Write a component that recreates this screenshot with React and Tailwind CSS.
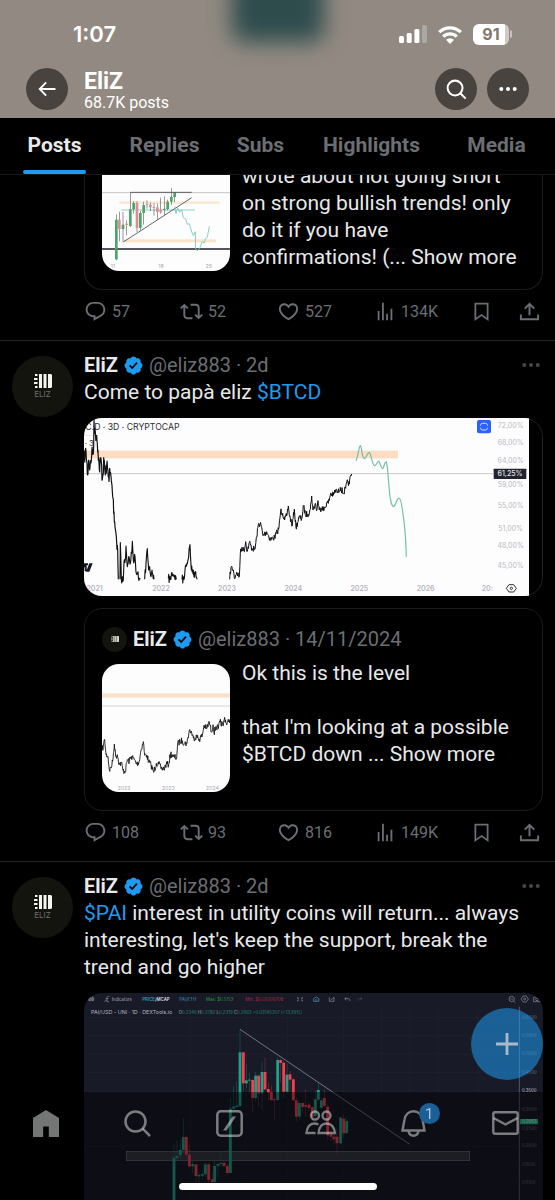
import React from "react";

/* ---------- icons ---------- */

const PATHS = {
  reply:
    "M1.751 10c0-4.42 3.584-8 8.005-8h4.366c4.49 0 8.129 3.64 8.129 8.13 0 2.96-1.607 5.68-4.196 7.11l-8.054 4.46v-3.69h-.067c-4.49.1-8.183-3.51-8.183-8.01zm8.005-6c-3.317 0-6.005 2.69-6.005 6 0 3.37 2.77 6.08 6.138 6.01l.351-.01h1.761v2.3l5.087-2.81c1.951-1.08 3.163-3.13 3.163-5.36 0-3.39-2.744-6.13-6.129-6.13H9.756z",
  repost:
    "M4.5 3.88l4.432 4.14-1.364 1.46L5.5 7.55V16c0 1.1.896 2 2 2H13v2H7.5c-2.209 0-4-1.79-4-4V7.55L1.432 9.48.068 8.02 4.5 3.88zM16.5 6H11V4h5.500c2.209 0 4 1.79 4 4v8.45l2.068-1.93 1.364 1.46-4.432 4.14-4.432-4.14 1.364-1.46 2.068 1.93V8c0-1.1-.896-2-2-2z",
  like:
    "M16.697 5.5c-1.222-.06-2.679.51-3.89 2.16l-.805 1.09-.806-1.09C9.984 6.01 8.526 5.44 7.304 5.5c-1.243.07-2.349.78-2.91 1.91-.552 1.12-.633 2.78.479 4.82 1.074 1.97 3.257 4.27 7.129 6.61 3.87-2.34 6.052-4.64 7.126-6.61 1.111-2.04 1.03-3.7.477-4.82-.561-1.13-1.666-1.84-2.908-1.91zm4.187 7.69c-1.351 2.48-4.001 5.12-8.379 7.67l-.503.3-.504-.3c-4.379-2.55-7.029-5.19-8.382-7.67-1.36-2.5-1.41-4.86-.514-6.67.887-1.79 2.647-2.91 4.601-3.01 1.651-.09 3.368.56 4.798 2.01 1.429-1.45 3.146-2.1 4.796-2.01 1.954.1 3.714 1.22 4.601 3.01.896 1.81.846 4.17-.514 6.67z",
  views: "M8.75 21V2h2v19h-2zM18 21V8.5h2V21h-2zM4 21l.004-10h2L6 21H4zm9.248 0v-7h2v7h-2z",
  bookmark: "M4 2h16v20.94l-8-5.71-8 5.71V2zm2 2v15.06l6-4.29 6 4.29V4H6z",
  share:
    "M12 2.59l5.7 5.7-1.41 1.42L13 6.41V16h-2V6.41l-3.3 3.3-1.41-1.42L12 2.59zM22 15v6H2v-6h2v4h16v-4h2z",
  verified:
    "M20.396 11c-.018-.646-.215-1.275-.57-1.816-.354-.54-.852-.972-1.438-1.246.223-.607.27-1.264.14-1.897-.131-.634-.437-1.218-.882-1.687-.47-.445-1.053-.75-1.687-.882-.633-.13-1.29-.083-1.897.14-.273-.587-.704-1.086-1.245-1.44S11.647 1.62 11 1.604c-.646.017-1.273.213-1.813.568s-.969.854-1.24 1.44c-.608-.223-1.267-.272-1.902-.14-.635.13-1.22.436-1.69.882-.445.47-.749 1.055-.878 1.688-.13.633-.08 1.29.144 1.896-.587.274-1.087.705-1.443 1.245-.356.54-.555 1.17-.574 1.817.02.647.218 1.276.574 1.817.356.54.856.972 1.443 1.245-.224.606-.274 1.263-.144 1.896.13.634.433 1.218.877 1.688.47.443 1.054.747 1.687.878.633.132 1.29.084 1.897-.136.274.586.705 1.084 1.246 1.439.54.354 1.17.551 1.816.569.647-.016 1.276-.213 1.817-.567s.972-.854 1.245-1.44c.604.239 1.266.296 1.903.164.636-.132 1.22-.447 1.68-.907.46-.46.776-1.044.908-1.681s.075-1.299-.165-1.903c.586-.274 1.084-.705 1.439-1.246.354-.54.551-1.17.569-1.816zM9.662 14.85l-3.429-3.428 1.293-1.302 2.072 2.072 4.4-4.794 1.347 1.246z",
};

function Icon({ name, className }) {
  return (
    <svg viewBox="0 0 24 24" fill="currentColor" className={className} aria-hidden="true">
      <path d={PATHS[name]} />
    </svg>
  );
}

function Verified() {
  return (
    <svg viewBox="1 1 20 20" className="size-[19px] shrink-0" role="img" aria-label="Verified">
      <path fill="#1d9bf0" d={PATHS.verified} />
    </svg>
  );
}

function Dots({ className }) {
  return (
    <svg viewBox="0 0 18 6" fill="currentColor" className={className} aria-hidden="true">
      <circle cx="2.3" cy="3" r="2" />
      <circle cx="9" cy="3" r="2" />
      <circle cx="15.7" cy="3" r="2" />
    </svg>
  );
}

function LogoMark({ className }) {
  return (
    <svg viewBox="0 0 18 14" fill="#f4f4f0" className={className} aria-hidden="true">
      <path d="M1 0h2.500v2H1zM0 4h3.500v2H0zM0 8h3.500v2H0zM1 12h2.500v2H1zM5 0h3v14H5zM9.500 0h3v14h-3zM14 0h3l1 1v12l-1 1h-3z" />
    </svg>
  );
}

/* ---------- chart helpers ---------- */

function jagged(points, amp, step) {
  let seed = 7;
  const rand = () => {
    seed = (seed * 16807) % 2147483647;
    return seed / 2147483647 - 0.5;
  };
  let d = "";
  for (let i = 0; i < points.length - 1; i++) {
    const [x0, y0] = points[i];
    const [x1, y1] = points[i + 1];
    const n = Math.max(1, Math.round(Math.abs(x1 - x0) / step));
    for (let k = 0; k < n; k++) {
      const x = x0 + ((x1 - x0) * k) / n;
      const y = y0 + ((y1 - y0) * k) / n + (k ? rand() * amp : 0);
      d += `${d ? "L" : "M"}${x.toFixed(1)} ${y.toFixed(1)}`;
    }
  }
  const last = points[points.length - 1];
  return `${d}L${last[0]} ${last[1]}`;
}

function Candles({ data, up, down, width, wick }) {
  return data.map(([x, top, bottom, high, low, rising]) => (
    <g key={x} fill={rising ? up : down}>
      <rect x={x - 0.75} y={high} width="1.5" height={low - high} fill={wick} opacity={wick ? 1 : 0.6} />
      <rect x={x - width / 2} y={top} width={width} height={bottom - top} />
    </g>
  ));
}

/* ---------- charts ---------- */

const DOM_A = [[12, 150], [18, 122], [23, 195], [26, 150], [30, 172], [35, 135], [41, 110], [42, 28], [44, 70], [50, 76], [54, 120], [58, 178], [63, 145], [67, 208], [72, 150], [76, 195], [80, 165], [86, 200], [90, 185], [94, 212], [99, 265], [104, 335], [109, 380], [113, 420], [115, 508]];
const DOM_B = [
  [[120, 508], [121, 398], [124, 508], [130, 508], [132, 455], [136, 450], [138, 408], [142, 470], [146, 440], [150, 462], [155, 430], [157, 394], [160, 450], [165, 440], [169, 490], [174, 485], [178, 508], [180, 508]],
  [[194, 508], [198, 462], [202, 416], [206, 480], [209, 470], [213, 500], [216, 480], [222, 508]],
  [[265, 505], [271, 508], [276, 488], [283, 496], [289, 508]],
  [[306, 508], [312, 508], [317, 465], [323, 455], [330, 404], [334, 480], [340, 480], [343, 502], [347, 485], [352, 508]],
  [[449, 508], [453, 472], [460, 480], [463, 505], [470, 487], [478, 500], [481, 430], [486, 412], [492, 424], [497, 395], [502, 424], [508, 398], [516, 415], [525, 418], [530, 380], [536, 340], [543, 345], [549, 377], [560, 365], [571, 388], [584, 382], [592, 365], [597, 352], [602, 302], [608, 310], [614, 330], [620, 318], [625, 288], [629, 320], [637, 345], [643, 298], [648, 354], [657, 322], [665, 327], [671, 288], [676, 314], [684, 312], [691, 298], [695, 258], [699, 300], [706, 280], [710, 302], [714, 272], [718, 300], [727, 290], [732, 302], [740, 278], [745, 280], [752, 250], [760, 256], [767, 240], [774, 248], [781, 232], [790, 250], [797, 235], [803, 215], [808, 222], [812, 196], [815, 192]],
];
const SCALE_Y = [["72,00%", 46], ["68,00%", 97], ["64,00%", 151], ["59,00%", 224], ["55,00%", 287], ["51,00%", 355], ["48,00%", 408], ["45,00%", 467]];
const YEARS = [["2021", 44], ["2022", 243], ["2023", 441], ["2024", 640], ["2025", 838], ["2026", 1037]];

function DominanceChart() {
  return (
    <svg viewBox="12 24 1377 534" className="block w-full" role="img" aria-label="BTC.D 3 day chart" fontFamily="Inter, sans-serif">
      <rect x="13.5" y="25.5" width="1374" height="531" rx="54" fill="#000" stroke="#202327" strokeWidth="3" />
      <rect x="12" y="22" width="1335" height="538" fill="#fefdfe" />
      <rect x="12" y="122" width="942" height="23" fill="#fcdcc3" />
      <path d="M12 191H1238" stroke="#c9c9cb" strokeWidth="3" />
      <path d="M12 76H46M46 76V110" stroke="#dddddd" strokeWidth="2" fill="none" />
      <g fill="none" stroke="#111214" strokeLinejoin="round">
        <path d={jagged(DOM_A, 42, 1.1)} strokeWidth="3.6" />
        {DOM_B.map((seg, i) => (
          <path key={i} d={jagged(seg, i < 4 ? 26 : 20, 1.3)} strokeWidth={i < 4 ? 3.4 : 3} />
        ))}
      </g>
      <path
        d="M828 152C834 140 836 112 841 107C846 112 846 146 853 146C860 144 862 126 868 127C874 132 876 166 884 167C891 164 892 152 897 154C901 160 903 176 908 176C912 174 914 153 919 156C924 170 926 230 930 260C934 282 936 290 941 290C948 286 950 264 957 264C964 266 966 290 970 320C976 360 978 400 979 440"
        fill="none"
        stroke="#6cbfa5"
        strokeWidth="3.4"
      />
      <g fill="#2a2c33">
        <text x="16" y="60" fontSize="26">C.D · 3D · CRYPTOCAP</text>
        <text x="14" y="107" fontSize="23">· 3</text>
      </g>
      <path d="M12 460h12v6h-4v18h-6v-12h-2zM28 460h10l-10 25h-10z" fill="#131722" />
      <g fill="#b5b5ba" fontSize="21" fontWeight="600" textAnchor="middle">
        {YEARS.map(([y, x]) => (
          <text key={y} x={x} y="542">{y}</text>
        ))}
        <text x="1222" y="542">20:</text>
      </g>
      <g fill="#b9b9be" fontSize="21" textAnchor="middle">
        {SCALE_Y.map(([t, y]) => (
          <text key={t} x="1292" y={y + 7}>{t}</text>
        ))}
      </g>
      <rect x="1241" y="176" width="98" height="31" rx="2" fill="#21232e" />
      <text x="1290" y="199" fontSize="21" fontWeight="500" fill="#e4e4e8" textAnchor="middle">61,25%</text>
      <rect x="1191" y="30" width="42" height="40" rx="6" fill="#2962ff" />
      <path d="M1202 47v-2c0-3 2-5 5-5h10c3 0 5 2 5 5v2M1202 53v2c0 3 2 5 5 5h10c3 0 5-2 5-5v-2" fill="none" stroke="#fff" strokeWidth="2.4" />
      <g fill="none" stroke="#333" strokeWidth="3">
        <path d="M1287 524h14l8 11-8 11h-14l-8-11z" />
        <circle cx="1294" cy="535" r="3.5" />
      </g>
    </svg>
  );
}

const THUMB_LINE = [[66, 436], [70, 425], [74, 404], [78, 450], [84, 455], [88, 495], [93, 490], [98, 470], [103, 418], [107, 455], [112, 450], [118, 478], [124, 475], [129, 497], [136, 500], [142, 465], [148, 470], [154, 455], [162, 464], [170, 478], [178, 470], [183, 435], [190, 411], [194, 452], [201, 452], [206, 472], [213, 480], [221, 503], [229, 476], [236, 478], [244, 492], [252, 492], [259, 478], [266, 480], [272, 446], [280, 456], [290, 460], [293, 418], [300, 410], [307, 408], [313, 416], [321, 416], [328, 376], [335, 384], [340, 400], [350, 396], [358, 404], [367, 392], [372, 362], [380, 372], [388, 352], [394, 382], [399, 360], [402, 385], [408, 365], [415, 372], [420, 352], [430, 362], [434, 338], [439, 356], [446, 352], [450, 346]];

function LevelThumb() {
  return (
    <svg viewBox="66 178 384 384" className="size-32 shrink-0 rounded-[17px]" role="img" aria-label="BTC.D level" fontFamily="Inter, sans-serif">
      <rect x="66" y="178" width="384" height="384" fill="#fefdfe" />
      <rect x="66" y="266" width="384" height="13" fill="#fbe0ca" />
      <path d="M66 304H450" stroke="#c9c9cb" strokeWidth="2.5" />
      <path d={jagged(THUMB_LINE, 20, 1.3)} fill="none" stroke="#111214" strokeWidth="2.6" />
      <g fill="#a9a9ae" fontSize="16" textAnchor="middle">
        <text x="132" y="556">2022</text>
        <text x="265" y="556">2023</text>
        <text x="397" y="556">2024</text>
      </g>
    </svg>
  );
}

const TREND_CANDLES = [
  [109, 148, 267, 132, 270, 1], [118, 148, 176, 124, 213, 0], [129, 163, 176, 125, 215, 1], [140, 160, 164, 150, 195, 0], [151, 117, 167, 66, 170, 1],
  [161, 98, 117, 92, 130, 1], [171, 98, 173, 92, 185, 0], [181, 128, 173, 122, 180, 1], [191, 104, 128, 94, 163, 1], [201, 101, 103, 90, 115, 0],
  [211, 103, 111, 96, 122, 0], [222, 110, 113, 98, 136, 0], [232, 111, 125, 100, 148, 0], [242, 118, 126, 82, 130, 0], [253, 116, 119, 78, 134, 1],
  [263, 94, 116, 88, 120, 1], [274, 80, 94, 53, 104, 1], [284, 66, 80, 66, 95, 1],
];

function TrendThumb() {
  return (
    <svg viewBox="66 -82 384 384" className="size-32 shrink-0 rounded-[17px]" role="img" aria-label="Trend with projection" fontFamily="Inter, sans-serif">
      <rect x="66" y="-82" width="384" height="384" fill="#fefdfe" />
      <rect x="118" y="93" width="300" height="8" fill="#f8e8d6" />
      <rect x="132" y="207" width="276" height="9" fill="#fae3c6" />
      <path d="M66 67H450" stroke="#aaa" strokeWidth="2" />
      <path d="M66 236H450" stroke="#1c1e2b" strokeWidth="4" />
      <path d="M124 119H345" stroke="#73c4b8" strokeWidth="2.4" />
      <Candles data={TREND_CANDLES} up="#4ba567" down="#df8c93" width={8} wick="#33363a" />
      <path d="M151 66H335M130 215L335 82" stroke="#4a4a52" strokeWidth="2.6" />
      <path d="M284 108L288 130L293 112L299 126L305 118L310 142L317 146L322 162L328 160L334 182L340 196L346 184L347 236L352 242L360 232L366 214L373 218L376 206L382 200L388 168" fill="none" stroke="#73c9bd" strokeWidth="2.6" />
      <g fill="#a9a9ae" fontSize="16" textAnchor="middle">
        <text x="99" y="293">11</text>
        <text x="243" y="293">18</text>
        <text x="386" y="293">25</text>
      </g>
    </svg>
  );
}

const PAI_CANDLES = [
  [282, 515, 770, 475, 770, 1], [291, 510, 516, 462, 520, 1], [301, 492, 508, 462, 520, 1], [310, 453, 492, 395, 500, 1], [319, 453, 506, 450, 518, 0],
  [328, 506, 541, 475, 545, 0], [338, 534, 541, 525, 560, 1], [348, 535, 570, 533, 588, 0], [357, 567, 571, 560, 592, 1], [367, 564, 569, 550, 580, 1],
  [376, 535, 565, 530, 575, 1], [386, 535, 582, 532, 590, 0], [397, 580, 588, 560, 592, 0], [404, 540, 588, 520, 590, 1], [414, 534, 540, 528, 580, 1],
  [423, 531, 534, 500, 545, 1], [432, 530, 540, 525, 545, 0], [442, 540, 561, 535, 568, 0], [451, 368, 561, 335, 561, 1], [461, 362, 368, 300, 372, 1],
  [470, 359, 363, 285, 363, 1], [480, 199, 361, 130, 361, 1], [490, 199, 292, 197, 315, 0], [499, 283, 292, 235, 305, 1], [508, 281, 284, 262, 322, 1],
  [518, 282, 336, 278, 380, 0], [527, 269, 336, 258, 345, 1], [536, 269, 322, 265, 362, 0], [546, 258, 322, 228, 372, 1], [555, 258, 310, 215, 312, 0],
  [565, 309, 320, 290, 345, 0], [574, 318, 342, 300, 345, 0], [583, 340, 343, 335, 402, 0], [593, 222, 342, 215, 345, 1], [602, 222, 231, 218, 290, 0],
  [611, 230, 317, 226, 335, 0], [621, 266, 317, 232, 322, 1], [630, 265, 281, 255, 320, 0], [640, 280, 343, 275, 345, 0], [649, 343, 392, 335, 405, 0],
  [658, 351, 392, 345, 402, 1], [668, 351, 363, 345, 380, 0], [677, 357, 362, 312, 390, 0], [687, 356, 366, 350, 375, 0], [697, 364, 394, 360, 405, 0],
  [706, 340, 390, 315, 395, 1], [715, 312, 341, 290, 345, 1], [724, 343, 365, 335, 370, 1], [733, 336, 360, 310, 362, 0],
  [743, 362, 448, 355, 460, 0], [753, 445, 452, 432, 465, 0], [762, 452, 460, 440, 475, 0], [771, 452, 472, 430, 510, 0], [782, 395, 472, 390, 475, 1],
  [791, 398, 442, 385, 455, 0], [800, 405, 441, 395, 445, 1],
];
const PAI_SCALE = [["0.6000", 98], ["0.5500", 153], ["0.5000", 208], ["0.4000", 263], ["0.3500", 318], ["0.3000", 374], ["0.2500", 432], ["0.2000", 483], ["0.1500", 539], ["0.1000", 594]];

function PaiChart() {
  return (
    <svg viewBox="12 21 1377 750" className="block w-full" role="img" aria-label="PAI/USD daily chart" fontFamily="Inter, sans-serif">
      <rect x="10" y="20" width="1380" height="751" fill="#181a27" />
      <path
        d="M330 95V771M500 95V771M622 95V771M790 60V771M905 60V771M988 60V771M1075 60V771M1195 60V771M10 94H1318M10 148H1318M10 204H1318M10 260H1318M10 316H1318M10 406H1318M10 480H1318M10 535H1318M10 590H1318"
        stroke="#202331"
        strokeWidth="2"
      />
      <rect x="139" y="496" width="1030" height="28" fill="#ffffff" fillOpacity=".13" stroke="#9a9ca4" strokeOpacity=".6" strokeWidth="2" />
      <Candles data={PAI_CANDLES} up="#1fa08a" down="#f2404f" width={8.5} />
      <path d="M480 130L988 474" stroke="#8b8d98" strokeWidth="2.4" />
      <path d="M1318 62V771" stroke="#777985" strokeWidth="2" />
      <g fontSize="13" fill="#a3a6b3">
        <text x="95" y="45">Indicators</text>
        <text x="187" y="45" fontWeight="600" fill="#3b97bd">
          PRICE<tspan fill="#dcdee6">/MCAP</tspan>
        </text>
        <text x="298" y="45" fill="#3b97bd">PAI/ETH</text>
        <text x="378" y="45" fill="#2e9449">Max: $0.5153</text>
        <text x="496" y="45" fill="#b3283c">Min: $0.02006708</text>
        <text x="33" y="84" fontSize="16" fill="#b4b6c0">PAI/USD - UNI · 1D · DEXTools.io</text>
        <text x="296" y="83" fontSize="13">
          O<tspan fill="#218878">0.2346</tspan> H<tspan fill="#218878">0.2782</tspan> L<tspan fill="#218878">0.2319</tspan> C<tspan fill="#218878">0.2663 +0.03145307 (+13.39%)</tspan>
        </text>
      </g>
      <g fill="none" stroke="#9093a0" strokeWidth="2">
        <path d="M29 32v14M29 35h-3v8h6v-8zM38 32v14M38 35h-3v8h6v-8z" />
        <path d="M88 32c-5-2-7 0-7 5v10M76 38h9M73 47l5-4 4 4 5 1" />
        <path d="M653 33v4h4M667 33v4h-4M653 46v-4h4M667 46v-4h-4" />
        <path d="M701 38l8-5 8 5v8h-16zM705 42h8" stroke="#5695b8" />
        <path d="M748 34v12h14M752 42l5-4 5-4M762 34v12" />
        <path d="M795 38h10c4 0 5 3 4 7M799 34l-5 4 5 4" />
        <path d="M846 38h-9c-3 0-4 3-3 6M842 35l4 3-4 3" opacity=".4" />
        <circle cx="1295" cy="39" r="8" />
        <path d="M1301 45l5 5M1291 39h8" />
        <path d="M1329 30h10l6 9-6 9h-10l-6-9z" />
        <circle cx="1334" cy="39" r="3" />
        <path d="M1361 34h5l3-3h6l3 3h4v13h-21z" />
        <circle cx="1371" cy="40" r="4" />
      </g>
      <g fontSize="13" fill="#6e717c">
        {PAI_SCALE.map(([t, y]) => (
          <text key={t} x="1326" y={y} fill={t === "0.3500" ? "#c8c9d0" : undefined}>{t}</text>
        ))}
      </g>
      <rect x="1320" y="399" width="54" height="16" fill="#1fb187" />
      <text x="1326" y="412" fontSize="13" fill="#e2fff6">0.2663</text>
    </svg>
  );
}

/* ---------- header ---------- */

function StatusBar() {
  return (
    <div className="flex h-[68px] items-center justify-between pr-[43px] pl-[73px]">
      <time className="font-[Inter] text-[22px] leading-7 font-semibold">1:07</time>
      <div className="flex items-center gap-[11px]">
        <svg viewBox="0 0 28 18" className="h-[18px] w-7" fill="#fff" role="img" aria-label="Signal">
          <rect x="0" y="11" width="5" height="7" rx="1.5" />
          <rect x="7.7" y="8" width="5" height="10" rx="1.5" />
          <rect x="15.4" y="4" width="5" height="14" rx="1.5" />
          <rect x="23" y="0" width="5" height="18" rx="1.5" opacity=".25" />
        </svg>
        <svg viewBox="0 0 24 19" className="h-[19px] w-6" role="img" aria-label="Wi-Fi">
          <g fill="none" stroke="#fff" strokeWidth="3.2">
            <path d="M1.2 7.2a15.5 15.5 0 0 1 21.6 0" />
            <path d="M5.2 11.6a9.8 9.8 0 0 1 13.6 0" />
          </g>
          <path d="M8 14.8a5.7 5.7 0 0 1 8 0l-4 4.200z" fill="#fff" />
        </svg>
        <div className="flex items-center gap-px" aria-label="Battery">
          <div className="flex h-[21px] w-9 items-center justify-center rounded-[6px] bg-linear-to-r from-white from-90% to-[#cfcac6] to-90% font-[Inter] text-[16px] leading-5 font-bold text-[#807870]">91</div>
          <div className="h-2 w-0.5 rounded-r-full bg-white/50" />
        </div>
      </div>
    </div>
  );
}

const roundButton = "flex size-[42px] shrink-0 items-center justify-center rounded-full bg-[#48433e] text-white";

function Header() {
  return (
    <header className="relative h-[118px] overflow-hidden bg-[#928a82] text-white">
      <div className="absolute -top-12 left-1/2 h-[90px] w-[92px] -translate-x-1/2 rounded-xl bg-[#2f4c4d] blur-[11px]" />
      <div className="relative">
        <StatusBar />
        <div className="flex items-start pr-[26px] pl-[26px]">
          <button aria-label="Back" className={roundButton}>
            <svg viewBox="0 0 20 18" className="h-4 w-[18px]" fill="none" stroke="currentColor" strokeWidth="2.1" aria-hidden="true">
              <path d="M9 1.5L1.800 9L9 16.500M2 9h17.500" />
            </svg>
          </button>
          <div className="ml-4 flex-1 pt-[2px]">
            <h1 className="text-[23px] leading-6 font-bold">EliZ</h1>
            <p className="text-[16px] leading-[18px]">68.7K posts</p>
          </div>
          <div className="flex gap-[10px]">
            <button aria-label="Search" className={roundButton}>
              <svg viewBox="0 0 22 22" className="size-[21px]" fill="none" stroke="currentColor" strokeWidth="2.1" aria-hidden="true">
                <circle cx="9.500" cy="9.500" r="7.800" />
                <path d="M15 15l5.600 5.600" />
              </svg>
            </button>
            <button aria-label="More" className={roundButton}>
              <Dots className="h-[6px] w-[18px]" />
            </button>
          </div>
        </div>
      </div>
    </header>
  );
}

function Tabs() {
  return (
    <nav className="grid h-[57px] grid-cols-[109fr_111fr_81fr_141fr_109fr_4fr] border-b border-[#16181b] text-[21px] font-bold text-[#6b6f74]">
      {["Posts", "Replies", "Subs", "Highlights", "Media"].map((tab, i) => (
        <a key={tab} href="#posts" className="flex items-center justify-center">
          {i === 0 ? (
            <span className="relative flex h-full items-center px-[5px] text-[#e7e9ea]">
              {tab}
              <span className="absolute inset-x-0 bottom-0 h-1 rounded-full bg-[#1d9bf0]" />
            </span>
          ) : (
            tab
          )}
        </a>
      ))}
    </nav>
  );
}

/* ---------- posts ---------- */

function Actions({ replies, reposts, likes, views }) {
  const item = "flex items-center gap-[5px]";
  return (
    <div className="grid h-[43px] grid-cols-[96fr_97fr_97fr_97fr_47fr_25fr] text-[16px] text-[#6b6f74]">
      <button aria-label="Reply" className={item}>
        <Icon name="reply" className="size-[23px]" />
        {replies}
      </button>
      <button aria-label="Repost" className={item}>
        <Icon name="repost" className="size-[23px]" />
        {reposts}
      </button>
      <button aria-label="Like" className={item}>
        <Icon name="like" className="size-[23px]" />
        {likes}
      </button>
      <button aria-label="Views" className={item}>
        <Icon name="views" className="size-[22px]" />
        {views}
      </button>
      <button aria-label="Bookmark" className={item}>
        <Icon name="bookmark" className="size-[21px]" />
      </button>
      <button aria-label="Share" className={item}>
        <Icon name="share" className="size-[23px]" />
      </button>
    </div>
  );
}

function Byline({ date }) {
  return (
    <div className="flex items-center gap-[6px] text-[20px] leading-7 text-[#6b6f74]">
      <span className="font-bold text-[#e7e9ea]">EliZ</span>
      <Verified />
      <span>@eliz883 · {date}</span>
    </div>
  );
}

function Post({ children, body, stats }) {
  return (
    <article className="flex gap-[11px] border-t border-[#202327] pr-3 pb-[7px] pl-3">
      <div className="mt-[15px] flex size-[61px] shrink-0 flex-col items-center justify-center gap-px rounded-full bg-[#14140f]">
        <LogoMark className="h-[14px] w-[18px]" />
        <span className="font-[Inter] text-[8px] leading-[10px] text-[#6f6f6b]">ELIZ</span>
      </div>
      <div className="min-w-0 flex-1 pt-[10px]">
        <div className="flex items-center justify-between pr-[3px]">
          <Byline date="2d" />
          <button aria-label="More" className="text-[#45484c]">
            <Dots className="h-[6px] w-[18px]" />
          </button>
        </div>
        <p className="text-[21px] leading-[27px] text-[#e7e9ea]">{body}</p>
        {children}
        <Actions {...stats} />
      </div>
    </article>
  );
}

const tag = "text-[#1d9bf0]";

export default function App() {
  return (
    <div className="h-screen overflow-hidden bg-black font-[Roboto,sans-serif]">
      <Header />
      <Tabs />
      <main id="posts">
        <div className="pr-3 pb-[7px] pl-[84px]">
          <div className="flex h-[115px] items-end gap-3 overflow-hidden rounded-b-[18px] border border-t-0 border-[#191b1e] px-[17px] pb-[18px]">
            <TrendThumb />
            <p className="text-[21px] leading-[27px] whitespace-nowrap text-[#e7e9ea]">
              wrote about not going short
              <br />
              on strong bullish trends! only
              <br />
              do it if you have
              <br />
              confirmations! (... Show more
            </p>
          </div>
          <Actions replies="57" reposts="52" likes="527" views="134K" />
        </div>

        <Post
          body={
            <>
              Come to papà eliz <a href="#btcd" className={tag}>$BTCD</a>
            </>
          }
          stats={{ replies: "108", reposts: "93", likes: "816", views: "149K" }}
        >
          <div className="mt-3 overflow-hidden rounded-[18px]">
            <DominanceChart />
          </div>
          <div className="mt-3 rounded-[18px] border border-[#191b1e] px-[17px] pt-4 pb-[18px]">
            <div className="flex items-center gap-[6px]">
              <div className="flex size-[25px] items-center justify-center rounded-full bg-[#14140f]">
                <LogoMark className="h-[6px] w-2" />
              </div>
              <Byline date="14/11/2024" />
            </div>
            <div className="mt-[11px] flex gap-3">
              <LevelThumb />
              <p className="-mt-1 text-[21px] leading-[27px] whitespace-nowrap text-[#e7e9ea]">
                Ok this is the level
                <br />
                <br />
                that I'm looking at a possible
                <br />
                $BTCD down ... Show more
              </p>
            </div>
          </div>
        </Post>

        <Post
          body={
            <>
              <a href="#pai" className={tag}>$PAI</a> interest in utility coins will return... always
              <br />
              interesting, let's keep the support, break the
              <br />
              trend and go higher
            </>
          }
          stats={{ replies: "41", reposts: "38", likes: "402", views: "96K" }}
        >
          <div className="mt-3 overflow-hidden rounded-[18px]">
            <PaiChart />
          </div>
        </Post>
      </main>

      <button aria-label="New post" className="fixed right-3 bottom-[120px] flex size-[72px] items-center justify-center rounded-full bg-[#1d9bf0]/55 text-[#a9b9cb]">
        <svg viewBox="0 0 22 22" className="size-[22px]" stroke="currentColor" strokeWidth="2.8" aria-hidden="true">
          <path d="M11 0v22M0 11h22" />
        </svg>
      </button>

      <nav className="fixed inset-x-0 bottom-0 h-[108px] bg-black/45 pt-[15px] text-[#e7e9ea]/50">
        <div className="grid grid-cols-6 justify-items-center pr-1">
          <a href="#home" aria-label="Home" className="flex h-8 items-center">
            <svg viewBox="0 0 26 27" className="h-[27px] w-[26px]" fill="currentColor" aria-hidden="true">
              <path d="M13 0l13 8v19H15.800V16.500h-5.600V27H0V8z" />
            </svg>
          </a>
          <a href="#search" aria-label="Search" className="flex h-8 items-center">
            <svg viewBox="0 0 27 27" className="size-[27px]" fill="none" stroke="currentColor" strokeWidth="2.500" aria-hidden="true">
              <circle cx="11.500" cy="11.500" r="10" />
              <path d="M18.700 18.700L26 26" />
            </svg>
          </a>
          <a href="#grok" aria-label="Grok" className="flex h-8 items-center">
            <svg viewBox="0 0 27 27" className="size-[27px]" aria-hidden="true">
              <rect x="1.300" y="1.300" width="24.400" height="24.400" rx="3.500" fill="none" stroke="currentColor" strokeWidth="2.500" />
              <path d="M16.500 6.500h3.500L10.500 20.500H7z" fill="currentColor" />
            </svg>
          </a>
          <a href="#communities" aria-label="Communities" className="flex h-8 items-center">
            <svg viewBox="0 0 32 26" className="h-[26px] w-8" fill="none" stroke="currentColor" strokeWidth="2.300" aria-hidden="true">
              <circle cx="10" cy="5.500" r="4" />
              <circle cx="21.500" cy="5.500" r="4" />
              <path d="M13.500 23c.6-6 3.400-9.500 8-9.500s7.700 3.500 8.500 9.500zM10.500 23H1.500c.6-6 3.500-9.500 8-9.500 1.500 0 2.800.4 3.900 1.100" />
            </svg>
          </a>
          <a href="#notifications" aria-label="Notifications" className="relative flex h-8 items-center">
            <svg viewBox="0 0 25 27" className="h-[27px] w-[25px]" fill="none" stroke="currentColor" strokeWidth="2.400" aria-hidden="true">
              <path d="M1.500 20.500L3.400 10C4.200 4.500 7.800 1.300 12.500 1.300s8.300 3.200 9.100 8.700l1.900 10.500zM7.500 21c.5 3 2.400 4.700 5 4.700s4.500-1.700 5-4.700" />
            </svg>
            <span className="absolute -top-1 -right-[14px] flex size-[21px] items-center justify-center rounded-full bg-[#1a5f96] text-[15px] leading-4 text-[#b5c4d3]">1</span>
          </a>
          <a href="#messages" aria-label="Messages" className="flex h-8 items-center">
            <svg viewBox="0 0 27 24" className="h-6 w-[27px]" fill="none" stroke="currentColor" strokeWidth="2.400" aria-hidden="true">
              <rect x="1.300" y="1.300" width="24.400" height="21.400" rx="1.800" />
              <path d="M1.500 7l12 6.500 12-6.500" />
            </svg>
          </a>
        </div>
        <div className="absolute inset-x-0 bottom-[10px] mx-auto h-[7px] w-[198px] rounded-full bg-white" />
      </nav>
    </div>
  );
}
